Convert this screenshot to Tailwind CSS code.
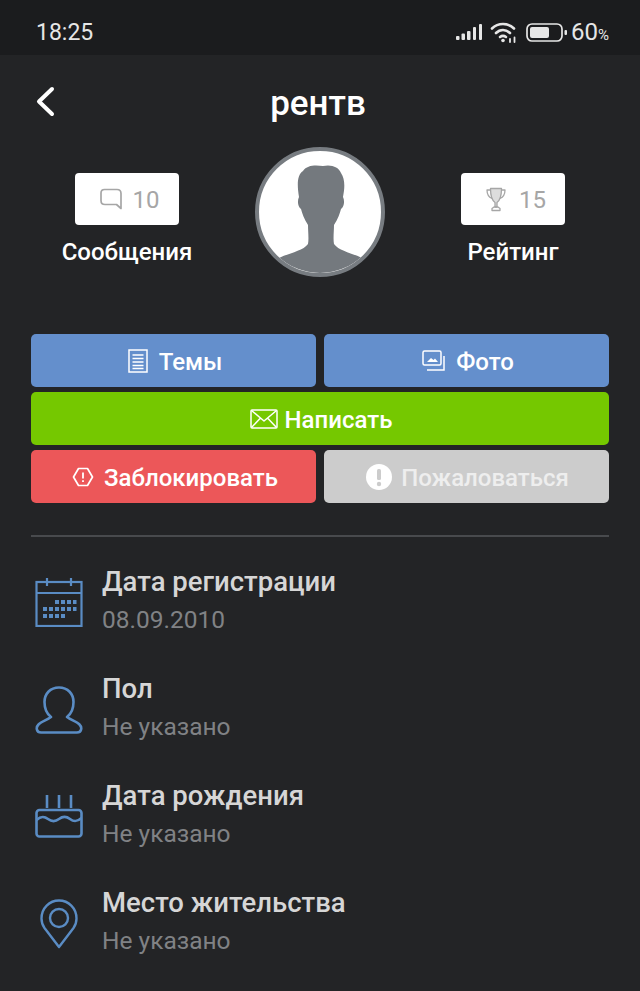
<!DOCTYPE html>
<html lang="ru">
<head>
  <meta charset="UTF-8">
  <meta name="viewport" content="width=device-width, initial-scale=1.0">
  <title>рентв</title>
  <script src="https://cdn.jsdelivr.net/npm/@tailwindcss/browser@4"></script>
</head>
<body class="bg-[#232426] font-[Roboto,sans-serif] w-[640px] h-[991px] overflow-hidden">

  <!-- status bar -->
  <div class="h-[55px] bg-[#1b1c1e] flex items-center justify-between pl-[36px] pr-[31px] pt-[9px] text-[#e6e6e6]">
    <span class="text-[23px] leading-none">18:25</span>
    <div class="flex items-center">
      <svg width="27" height="18" viewBox="0 0 27 18" fill="#e6e6e6">
        <rect x="0" y="13" width="3.5" height="4" rx="1"/>
        <rect x="5.5" y="10.5" width="3.5" height="6.5" rx="1"/>
        <rect x="11" y="8" width="3.5" height="9" rx="1"/>
        <rect x="17" y="4" width="3" height="13" rx="1"/>
        <rect x="23" y="1" width="3" height="16" rx="1"/>
      </svg>
      <svg class="ml-[7px]" width="27" height="22" viewBox="0 0 27 22" fill="none" stroke="#e6e6e6" stroke-width="2.6" stroke-linecap="round">
        <path d="M2 7.5C8 1.5 18 1.5 24 7.5"/>
        <path d="M6 12C10 8 16 8 20 12"/>
        <path d="M10 16C12 14.5 14 14.5 16 16"/>
        <circle cx="13" cy="19.5" r="1.8" fill="#e6e6e6" stroke="none"/>
        <path d="M20 18v3M24.5 16.5v4.5" stroke-width="1.8"/>
      </svg>
      <svg class="ml-[9px]" width="41" height="19" viewBox="0 0 41 19" fill="none">
        <rect x="1" y="1" width="35" height="17" rx="5" stroke="#e6e6e6" stroke-width="1.7"/>
        <rect x="4" y="4" width="19" height="11" rx="2" fill="#e6e6e6"/>
        <rect x="38.5" y="7" width="2.5" height="5" rx="1" fill="#e6e6e6"/>
      </svg>
      <span class="ml-[4px] text-[24px] leading-none">60</span><span class="text-[15px] leading-none mt-[6px]">%</span>
    </div>
  </div>

  <!-- header -->
  <div class="relative h-[92px] flex items-center justify-center pt-[4px] pr-[4px]">
    <svg class="absolute left-[35px] top-[31px]" width="22" height="31" viewBox="0 0 22 31" fill="none" stroke="#fff" stroke-width="4" stroke-linecap="round" stroke-linejoin="round">
      <path d="M17 3L4 15.5L17 28"/>
    </svg>
    <h1 class="text-[35px] leading-none font-medium text-white">рентв</h1>
  </div>

  <!-- profile -->
  <div class="h-[130px] pl-[62px] flex">
    <div class="w-[130px] pt-[26px] flex flex-col items-center">
      <div class="w-[104px] h-[52px] bg-white rounded-[4px] flex items-center justify-center pl-[5px] text-[#a6a6a6] text-[24px]">
        <svg width="22" height="22" viewBox="0 0 22 22" fill="none" stroke="#a6a6a6" stroke-width="1.7" stroke-linejoin="round">
          <path d="M4.5 1.5H17Q21 1.5 21 5.5V20.5L16.5 16.5H5Q1 16.5 1 12.5V5Q1 1.5 4.5 1.5Z"/>
        </svg>
        <span class="ml-[11px] mt-[1px] leading-none">10</span>
      </div>
      <span class="mt-[14px] text-[24px] leading-[27px] font-medium text-white whitespace-nowrap">Сообщения</span>
    </div>

    <div class="ml-[63px] w-[130px] h-[130px] rounded-full border-[4px] border-[#777c81] bg-white overflow-hidden">
      <svg width="122" height="122" viewBox="0 0 122 122" fill="#74797e">
        <path d="M-2 122V118L20 107C30 102 44 100 49 93C50 88 49 80 49 74C45 68 43 62 42 58C39 56 38 50 40 46C38 34 38 24 44 20C48 14 56 14 64 15C72 13 80 16 82 22C86 28 86 36 84 46C86 50 85 56 82 58C81 62 79 68 75 74C75 80 74 88 75 93C80 100 93 102 103 107L124 118V122Z"/>
      </svg>
    </div>

    <div class="ml-[76px] w-[104px] pt-[26px] flex flex-col items-center">
      <div class="w-[104px] h-[52px] shrink-0 bg-white rounded-[4px] flex items-center justify-center pl-[6px] text-[#a6a6a6] text-[24px]">
        <svg width="20" height="25" viewBox="0 0 20 25" fill="none" stroke="#a6a6a6" stroke-width="1.3" stroke-linejoin="round">
          <path d="M4.5 1.5H15.5C15.5 8 14.5 13 11 15.5V20H9V15.5C5.5 13 4.5 8 4.5 1.5Z" fill="#dddddd"/>
          <path d="M4.5 3H1C1 7 2.5 10 6 11.5M15.5 3H19C19 7 17.5 10 14 11.5"/>
          <path d="M6 23.5H14V21.5L12 20H8L6 21.5Z"/>
        </svg>
        <span class="ml-[13px] mt-[1px] leading-none">15</span>
      </div>
      <span class="mt-[14px] text-[24px] leading-[27px] font-medium text-white whitespace-nowrap">Рейтинг</span>
    </div>
  </div>

  <!-- actions -->
  <div class="mt-[57px] px-[31px] flex flex-col gap-[5px] text-[24px] font-medium text-white">
    <div class="grid grid-cols-2 gap-[8px]">
      <button class="h-[53px] bg-[#648fcc] rounded-[5px] flex items-center justify-center pl-[3px]">
        <svg width="20" height="24" viewBox="0 0 20 24" fill="none" stroke="#fff" stroke-width="1.5">
          <rect x="1" y="1" width="18" height="22"/>
          <path d="M4.5 6H15.5M4.5 9.5H15.5M4.5 13H15.5M4.5 16.5H15.5M4.5 19.5H15.5" stroke-width="1.3"/>
        </svg>
        <span class="ml-[11px] mt-[2px]">Темы</span>
      </button>
      <button class="h-[53px] bg-[#648fcc] rounded-[5px] flex items-center justify-center pl-[3px]">
        <svg width="23" height="21" viewBox="0 0 23 21" fill="none" stroke="#fff" stroke-width="1.5">
          <rect x="1" y="1" width="18" height="14" rx="1.5"/>
          <path d="M22 6V20H5"/>
          <path d="M5 12L9 8L11.5 10L13 8.5L16 12Z" fill="#fff" stroke="none"/>
        </svg>
        <span class="ml-[11px] mt-[2px]">Фото</span>
      </button>
    </div>
    <button class="h-[53px] bg-[#75c800] rounded-[5px] flex items-center justify-center pl-[2px]">
      <svg width="28" height="20" viewBox="0 0 28 20" fill="none" stroke="#fff" stroke-width="1.5" stroke-linejoin="round">
        <rect x="1" y="1" width="26" height="18" rx="1"/>
        <path d="M1.5 1.5L14 12L26.5 1.5M1.5 18.5L10.5 9M26.5 18.5L17.5 9"/>
      </svg>
      <span class="ml-[7px] mt-[2px]">Написать</span>
    </button>
    <div class="grid grid-cols-2 gap-[8px]">
      <button class="h-[53px] bg-[#ec5759] rounded-[5px] flex items-center justify-center pl-[3px]">
        <svg width="22" height="20" viewBox="0 0 22 20" fill="none" stroke="#fff" stroke-width="1.7" stroke-linejoin="round">
          <path d="M6.5 1.5H15.5L20.5 10L15.5 18.5H6.5L1.5 10Z"/>
          <path d="M11 5.5V11.5M11 13.2V15" stroke-width="1.8"/>
        </svg>
        <span class="ml-[10px] mt-[2px]">Заблокировать</span>
      </button>
      <button class="h-[53px] bg-[#cccccc] rounded-[5px] flex items-center justify-center pl-[2px] text-[#eeeeee]">
        <svg width="26" height="26" viewBox="0 0 26 26">
          <circle cx="13" cy="13" r="13" fill="#fff"/>
          <rect x="11" y="5" width="4" height="11" rx="1.5" fill="#cccccc"/>
          <circle cx="13" cy="20" r="2.2" fill="#cccccc"/>
        </svg>
        <span class="ml-[9px] mt-[2px]">Пожаловаться</span>
      </button>
    </div>
  </div>

  <div class="mx-[31px] mt-[32px] h-[2px] bg-[#484a4d]"></div>

  <!-- info list -->
  <div class="pl-[35px] pt-[33px] flex flex-col gap-[47px]">
    <div class="flex items-center h-[60px]">
      <div class="w-[48px] flex justify-center mr-[19px] mt-[4px]">
        <svg width="48" height="49" viewBox="0 0 48 49" fill="none" stroke="#5a8cc4" stroke-width="2.2">
          <rect x="1.5" y="4" width="45" height="44"/>
          <path d="M1.5 15H46.5M12 0V8M36 0V8"/>
          <g fill="#5a8cc4" stroke="none">
            <rect x="20" y="22" width="4" height="4"/><rect x="26" y="22" width="4" height="4"/><rect x="32" y="22" width="4" height="4"/><rect x="38" y="22" width="3.5" height="4"/>
            <rect x="8" y="29" width="4" height="4"/><rect x="14" y="29" width="4" height="4"/><rect x="20" y="29" width="4" height="4"/><rect x="26" y="29" width="4" height="4"/><rect x="32" y="29" width="4" height="4"/><rect x="38" y="29" width="3.5" height="4"/>
            <rect x="8" y="36" width="4" height="4"/><rect x="14" y="36" width="4" height="4"/><rect x="20" y="36" width="4" height="4"/><rect x="26" y="36" width="4" height="4"/>
          </g>
        </svg>
      </div>
      <div>
        <div class="text-[27.5px] leading-[30px] font-medium text-[#d6d6d6] whitespace-nowrap">Дата регистрации</div>
        <div class="mt-[9px] text-[24.5px] leading-[27px] text-[#808285]">08.09.2010</div>
      </div>
    </div>
    <div class="flex items-center h-[60px]">
      <div class="w-[48px] flex justify-center mr-[19px] mt-[6px]">
        <svg width="48" height="48" viewBox="0 0 48 48" fill="none" stroke="#5a8cc4" stroke-width="2.6" stroke-linejoin="round">
          <path d="M24 1.5C15 1.5 9.5 8 9.5 16C9.5 22 12 28 16 31C12 34 6 36 3.5 38.5C.5 41.5 1.5 46.5 6 46.5H42C46.5 46.5 47.5 41.5 44.5 38.5C42 36 36 34 32 31C36 28 38.5 22 38.5 16C38.5 8 33 1.5 24 1.5Z"/>
        </svg>
      </div>
      <div>
        <div class="text-[27.5px] leading-[30px] font-medium text-[#d6d6d6] whitespace-nowrap">Пол</div>
        <div class="mt-[9px] text-[24.5px] leading-[27px] text-[#808285]">Не указано</div>
      </div>
    </div>
    <div class="flex items-center h-[60px]">
      <div class="w-[48px] flex justify-center mr-[19px] mt-[4px]">
        <svg width="48" height="43" viewBox="0 0 48 43" fill="none" stroke="#5a8cc4" stroke-width="2.6" stroke-linejoin="round">
          <rect x="1.5" y="15" width="45" height="26.5" rx="3"/>
          <path d="M1.5 25C6 21 9 21 13 24C17 27 20 27 24 24C28 21 31 21 35 24C39 27 42 27 46.5 23"/>
          <path d="M12 0V13M24 0V13M36 0V13"/>
        </svg>
      </div>
      <div>
        <div class="text-[27.5px] leading-[30px] font-medium text-[#d6d6d6] whitespace-nowrap">Дата рождения</div>
        <div class="mt-[9px] text-[24.5px] leading-[27px] text-[#808285]">Не указано</div>
      </div>
    </div>
    <div class="flex items-center h-[60px]">
      <div class="w-[48px] flex justify-center mr-[19px] mt-[6px]">
        <svg width="38" height="50" viewBox="0 0 38 50" fill="none" stroke="#5a8cc4" stroke-width="2.4" stroke-linejoin="round">
          <path d="M19 48L4.5 29C2 25.5 1.5 22.5 1.5 19.5C1.5 9 9.5 1.5 19 1.5C28.5 1.5 36.5 9 36.5 19.5C36.5 22.5 36 25.5 33.5 29Z"/>
          <circle cx="19" cy="19" r="9"/>
        </svg>
      </div>
      <div>
        <div class="text-[27.5px] leading-[30px] font-medium text-[#d6d6d6] whitespace-nowrap">Место жительства</div>
        <div class="mt-[9px] text-[24.5px] leading-[27px] text-[#808285]">Не указано</div>
      </div>
    </div>
  </div>

</body>
</html>
